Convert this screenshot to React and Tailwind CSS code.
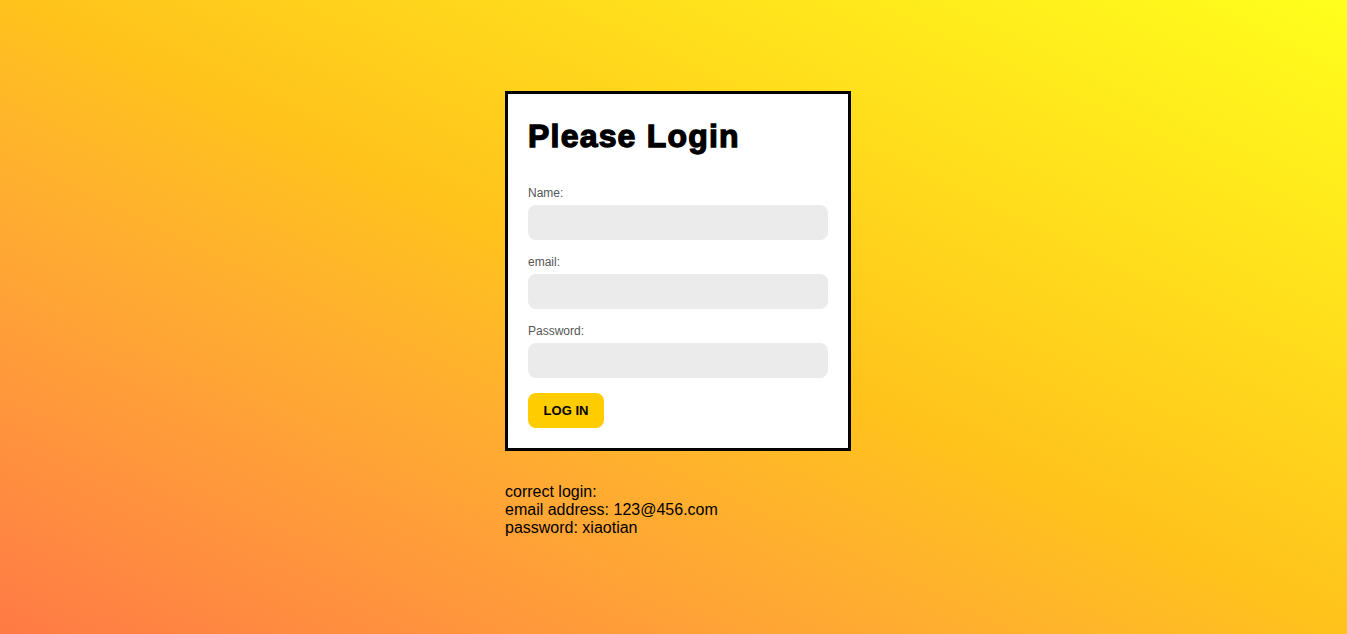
import React from 'react';

const Field = ({ label, type }) => (
  <div>
    <label className="block text-[12px] leading-[14px] text-[#555555] mb-[5px]">{label}</label>
    <input
      type={type}
      className="block w-full h-[35px] rounded-[8px] bg-[#ecebeb] border-0 outline-none px-3 mb-[15px]"
    />
  </div>
);

const App = () => {
  return (
    <div
      className="w-full h-[634px] overflow-hidden bg-gradient-to-tr from-[#ff7a45] via-[#ffc21c] to-[#ffff1c] flex justify-center"
      style={{ fontFamily: '"Liberation Sans", Arial, sans-serif' }}
    >
      <div className="ml-[9px] pt-[91px] w-[346px]">
        <div className="bg-white border-[3px] border-black px-[20px] pt-[22px] pb-[20px]">
          <h1 className="text-[32px] leading-[40px] font-bold tracking-[1.2px] text-black [-webkit-text-stroke:1.3px_black] mb-[30px]">
            Please Login
          </h1>
          <Field label="Name:" type="text" />
          <Field label="email:" type="email" />
          <Field label="Password:" type="password" />
          <button className="h-[35px] px-[15px] w-[76px] rounded-[8px] bg-[#ffcc00] text-black text-[13px] font-bold">
            LOG IN
          </button>
        </div>
        <div className="mt-[32px] text-[16px] leading-[18px] text-black">
          <div>correct login:</div>
          <div>email address: 123@456.com</div>
          <div>password: xiaotian</div>
        </div>
      </div>
    </div>
  );
};

export default App;
